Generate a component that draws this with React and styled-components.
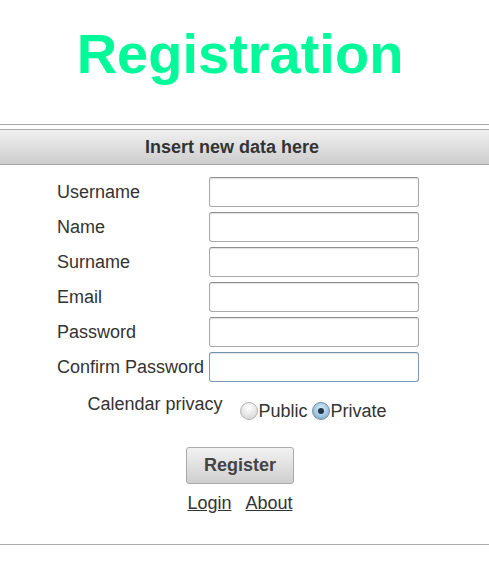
import React from "react";
import styled, { createGlobalStyle } from "styled-components";

const GlobalStyle = createGlobalStyle`
  html, body {
    margin: 0;
    padding: 0;
    background: #fff;
  }
  body {
    font-family: "Liberation Sans", Arial, sans-serif;
    color: #333;
  }
`;

const Page = styled.div`
  width: 489px;
  display: flex;
  flex-direction: column;
`;

const Title = styled.h1`
  margin: 22px 0 0;
  width: 480px;
  text-align: center;
  font-size: 56px;
  line-height: 64px;
  font-weight: bold;
  color: #00fa9a;
`;

const Rule = styled.div`
  height: 1px;
  background: #aaa;
  margin-top: ${(p) => p.$top}px;
`;

const Bar = styled.div`
  margin-top: 4px;
  height: 34px;
  border-top: 1px solid #aaa;
  border-bottom: 1px solid #a8a8a8;
  background: linear-gradient(#f0f0f0, #cdcdcd);
  display: flex;
  align-items: center;
  justify-content: center;
  padding-right: 25px;
  font-size: 18px;
  font-weight: bold;
  color: #333;
`;

const Form = styled.form`
  width: 480px;
  padding-top: 12px;
  display: flex;
  flex-direction: column;
  align-items: center;
`;

const Fields = styled.div`
  display: grid;
  grid-template-columns: 152px 210px;
  row-gap: 5px;
  margin-left: -4px;
`;

const Label = styled.label`
  display: flex;
  align-items: center;
  font-size: 18px;
  color: #333;
  white-space: nowrap;
`;

const Input = styled.input`
  box-sizing: border-box;
  width: 210px;
  height: 30px;
  margin: 0;
  border: 1px solid ${(p) => (p.$active ? "#7d9bb4" : "#a9a9a9")};
  border-top-color: ${(p) => (p.$active ? "#6f90ab" : "#8e8e8e")};
  border-radius: 3px;
  box-shadow: inset 0 1px 1px rgba(0, 0, 0, 0.12);
  background: #fff;
  outline: none;
`;

const PrivacyRow = styled.div`
  margin-top: 16px;
  height: 24px;
  display: flex;
  align-items: center;
  font-size: 18px;
  color: #333;
  padding-right: 6px;
`;

const PrivacyLabel = styled.span`
  margin-right: 17px;
  position: relative;
  top: -6px;
`;

const Choice = styled.label`
  display: flex;
  align-items: center;
  margin-right: ${(p) => p.$gap || 0}px;
  position: relative;
  top: 1px;
`;

const Radio = styled.input.attrs({ type: "radio" })`
  appearance: none;
  -webkit-appearance: none;
  box-sizing: border-box;
  width: 18px;
  height: 18px;
  margin: 0 1px 0 0;
  border-radius: 50%;
  border: 1px solid #b5b5b5;
  background: radial-gradient(circle at 50% 30%, #ffffff 0%, #e6e6e6 55%, #c9c9c9 100%);
  position: relative;

  &:checked {
    border-color: #6e8ea9;
    background: radial-gradient(circle at 50% 35%, #d9ecf8 0%, #9cc2dd 60%, #6f9cc0 100%);
  }
  &:checked::after {
    content: "";
    position: absolute;
    left: 5px;
    top: 5px;
    width: 6px;
    height: 6px;
    border-radius: 50%;
    background: #1f3547;
  }
`;

const Button = styled.button`
  margin-top: 25px;
  width: 108px;
  height: 37px;
  border: 1px solid #aaa;
  border-radius: 3px;
  background: linear-gradient(#f2f2f2, #cfcfcf);
  font-family: "Liberation Sans", Arial, sans-serif;
  font-size: 18px;
  font-weight: bold;
  color: #444;
`;

const Links = styled.div`
  margin-top: 9px;
  display: flex;
  gap: 14px;
  font-size: 18px;
  line-height: 20px;
`;

const Link = styled.a`
  color: #333;
  text-decoration: underline;
`;

const fields = [
  { label: "Username", type: "text" },
  { label: "Name", type: "text" },
  { label: "Surname", type: "text" },
  { label: "Email", type: "email" },
  { label: "Password", type: "password" },
  { label: "Confirm Password", type: "password", active: true },
];

export default function App() {
  return (
    <>
      <GlobalStyle />
      <Page>
        <Title>Registration</Title>
        <Rule $top={38} />
        <Bar>Insert new data here</Bar>
        <Form onSubmit={(e) => e.preventDefault()}>
          <Fields>
            {fields.map((f) => (
              <React.Fragment key={f.label}>
                <Label>{f.label}</Label>
                <Input type={f.type} $active={f.active} />
              </React.Fragment>
            ))}
          </Fields>
          <PrivacyRow>
            <PrivacyLabel>Calendar privacy</PrivacyLabel>
            <Choice $gap={4}>
              <Radio name="privacy" value="public" />
              Public
            </Choice>
            <Choice>
              <Radio name="privacy" value="private" defaultChecked />
              Private
            </Choice>
          </PrivacyRow>
          <Button type="submit">Register</Button>
          <Links>
            <Link href="#">Login</Link>
            <Link href="#">About</Link>
          </Links>
        </Form>
        <Rule $top={31} />
      </Page>
    </>
  );
}
